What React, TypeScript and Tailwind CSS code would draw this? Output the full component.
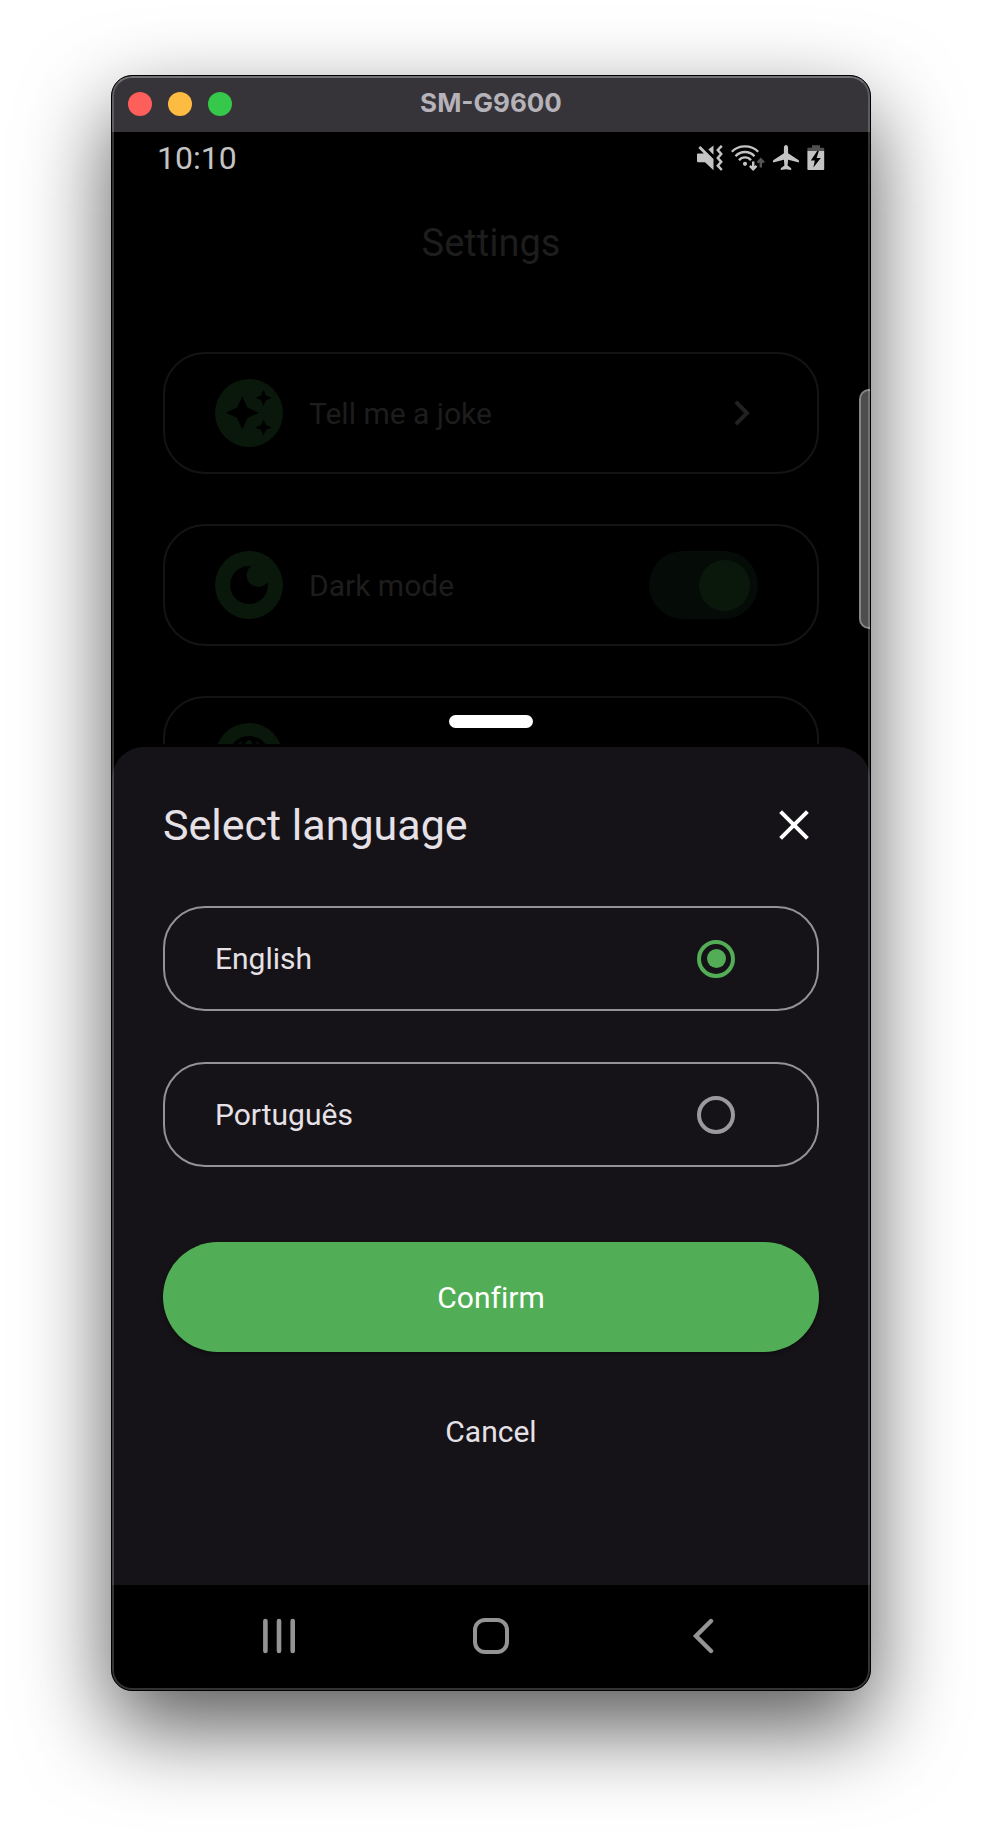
import React, { useState } from "react";

function MuteIcon() {
  return (
    <svg className="h-[26px] w-[26px]" viewBox="0 0 26 26" fill="#c4c4c4" aria-hidden="true">
      <path d="M3.4 1 16.5 14v11.3L8 17.2H1.2Q0 17.2 0 16V9.6Q0 8.4 1.2 8.4H6.8L1.4 3Z" />
      <path d="M16.5.4v9.4L11.3 4.6Z" />
      <path d="m24.8.8-4 4.2 3.4 4-3.4 4 3.4 3.8-3.4 3.9 4 4.3" fill="none" stroke="#c4c4c4" strokeWidth="2.5" />
    </svg>
  );
}

function WifiIcon() {
  return (
    <svg className="h-[26px] w-[34px]" viewBox="0 0 34 26" fill="none" stroke="#c4c4c4" strokeWidth="2.3" aria-hidden="true">
      <path d="M.8 6.8Q6 1.4 14 1.4T27.2 6.8" />
      <path d="M4.5 11.2Q8.2 7 14 7t9.5 4.2" />
      <path d="M8 15.2Q10.4 12.4 14 12.4t6 2.8" />
      <circle cx="14" cy="18.8" r="2.1" fill="#c4c4c4" stroke="none" />
      <path d="M22.2 16.6v7.4M18.9 20.8l3.3 3.4 3.3-3.4" strokeWidth="2.4" />
      <path d="M29.8 22.4v-7.6M26.7 17.6l3.1-3.3 3.1 3.3" stroke="#555555" strokeWidth="2.4" />
    </svg>
  );
}

function PlaneIcon() {
  return (
    <svg className="h-[26px] w-[26px]" viewBox="0 0 26 26" fill="#c4c4c4" aria-hidden="true">
      <path d="M13 0c1.4 0 2.1 1.4 2.1 3v5.2L25.4 15q.6.4.6 1v1.6l-10.9-2.8-.5 5.6 3.6 2.8V25L13 24.2 7.8 25v-1.8l3.6-2.8-.5-5.6L0 17.6V16q0-.6.6-1l10.3-6.8V3C10.9 1.4 11.6 0 13 0Z" />
    </svg>
  );
}

function BatteryIcon() {
  return (
    <svg className="h-[26px] w-[18px]" viewBox="0 0 18 26" aria-hidden="true">
      <path d="M5 .2h8v2.6h4.2V6H.4V2.8H5Z" fill="#505050" />
      <path d="M.4 6h16.8v18q0 1-1 1H1.4q-1 0-1-1Z" fill="#c4c4c4" />
      <path d="M10.2 6 3.8 15.4h4L6.4 22.6l7.4-9.6H9.6L11.8 6Z" fill="#000000" />
    </svg>
  );
}

function SparkleIcon() {
  return (
    <svg className="size-[68px] shrink-0" viewBox="0 0 68 68" aria-hidden="true">
      <circle cx="34" cy="34" r="34" fill="#0a180c" />
      <g fill="#000000">
        <path d="M27.3 17.3 32.4 28.6 43.8 33.8 32.4 39 27.3 50.3 22.2 39 10.8 33.8 22.2 28.6Z" />
        <path d="M48.5 10.8 51 16.4 56.6 18.8 51 21.3 48.5 26.9 46 21.3 40.4 18.8 46 16.4Z" />
        <path d="M48.5 40.4 51 46 56.6 48.5 51 51 48.5 56.6 46 51 40.4 48.5 46 46Z" />
      </g>
    </svg>
  );
}

function MoonIcon() {
  return (
    <svg className="size-[68px] shrink-0" viewBox="0 0 68 68" aria-hidden="true">
      <circle cx="34" cy="34" r="34" fill="#0a180c" />
      <circle cx="34" cy="34" r="19" fill="#000000" />
      <circle cx="43.3" cy="24.2" r="11.6" fill="#0a180c" />
    </svg>
  );
}

function GlobeIcon() {
  return (
    <svg className="size-[68px] shrink-0" viewBox="0 0 68 68" aria-hidden="true">
      <circle cx="34" cy="34" r="34" fill="#0a180c" />
      <g fill="none" stroke="#000000" strokeWidth="4">
        <circle cx="34" cy="34" r="19" />
        <ellipse cx="34" cy="34" rx="8" ry="19" />
        <path d="M16 27h36M16 41h36" />
      </g>
    </svg>
  );
}

const settingCard =
  "flex h-[122px] w-full shrink-0 items-center gap-[26px] rounded-[42px] border-2 border-[#141414] pl-[50px] text-left text-[30px] text-[#1d1d1d]";

function Titlebar() {
  return (
    <header className="grid h-14 grid-cols-[1fr_auto_1fr] items-center bg-[#363439] px-4">
      <div className="flex gap-4">
        <button aria-label="Close window" className="size-6 rounded-full bg-[#ff5f5b]" />
        <button aria-label="Minimize window" className="size-6 rounded-full bg-[#fdbb41]" />
        <button aria-label="Zoom window" className="size-6 rounded-full bg-[#35c84a]" />
      </div>
      <h1 className="pb-0.5 font-[Inter,sans-serif] text-[26px] leading-8 font-bold text-[#b5b2b9]">SM-G9600</h1>
    </header>
  );
}

function SettingsScreen() {
  return (
    <section className="flex h-[612px] flex-col overflow-hidden">
      <div className="flex h-[52px] shrink-0 items-center justify-between px-[45px] text-[32px] leading-9 text-[#c4c4c4]">
        <time>10:10</time>
        <div className="flex items-center gap-2">
          <MuteIcon />
          <WifiIcon />
          <PlaneIcon />
          <BatteryIcon />
        </div>
      </div>
      <h2 className="mt-[37px] shrink-0 text-center text-[38px] leading-[44px] text-[#1d1d1d]">Settings</h2>
      <div className="mt-[87px] flex flex-col gap-[50px] px-[51px]">
        <button className={settingCard}>
          <SparkleIcon />
          <span className="grow">Tell me a joke</span>
          <svg className="mr-[67px] h-[26px] w-4" viewBox="0 0 16 26" fill="none" stroke="#222222" strokeWidth="4" aria-hidden="true">
            <path d="m1.8 1.8 11.2 11.2L1.8 24.2" />
          </svg>
        </button>
        <label className={settingCard}>
          <MoonIcon />
          <span className="grow">Dark mode</span>
          <input
            type="checkbox"
            role="switch"
            defaultChecked
            className="mr-[59px] flex h-[68px] w-[109px] appearance-none items-center rounded-full bg-[#050b07] px-2 before:size-[51px] before:rounded-full before:bg-[#0a180b] checked:justify-end"
          />
        </label>
        <button className={settingCard} aria-label="Language">
          <GlobeIcon />
        </button>
      </div>
    </section>
  );
}

function LanguageSheet() {
  const [language, setLanguage] = useState("English");
  return (
    <section role="dialog" aria-labelledby="sheet-title" className="relative mt-[3px] rounded-t-[32px] bg-[#151317] px-[51px] pt-[50px] pb-[125px] text-[30px] text-[#e6e1e6] [font-variant-ligatures:none]">
      <div className="absolute -top-8 left-1/2 h-[13px] w-[84px] -translate-x-1/2 rounded-full bg-white" />
      <div className="flex h-14 items-center justify-between">
        <h2 id="sheet-title" className="text-[43px] leading-[56px]">Select language</h2>
        <button aria-label="Close" className="mr-[9px]">
          <svg className="size-8" viewBox="0 0 32 32" fill="none" stroke="#ffffff" strokeWidth="4" aria-hidden="true">
            <path d="m2.6 2.6 26.8 26.8M29.4 2.6 2.6 29.4" />
          </svg>
        </button>
      </div>
      <fieldset aria-label="Language" className="mt-[53px] flex flex-col gap-[51px]">
        {["English", "Português"].map((name) => (
          <label key={name} className="flex h-[105px] items-center justify-between rounded-[42px] border-2 border-[#949294] pr-[82px] pl-[50px]">
            {name}
            <input
              type="radio"
              name="language"
              value={name}
              checked={language === name}
              onChange={() => setLanguage(name)}
              className="grid size-[38px] appearance-none place-items-center rounded-full border-4 border-[#9b999b] before:size-[19px] before:rounded-full checked:border-[#52ad56] checked:before:bg-[#52ad56]"
            />
          </label>
        ))}
      </fieldset>
      <button className="mt-[75px] block h-[110px] w-full rounded-full bg-[#52ae56] text-white shadow-[0_2px_4px_rgba(0,0,0,0.4)]">Confirm</button>
      <button className="mx-auto mt-[50px] block h-[58px] px-6">Cancel</button>
    </section>
  );
}

function NavBar() {
  return (
    <nav className="flex h-[105px] items-center justify-center gap-44 pb-1">
      <button aria-label="Recent apps">
        <svg className="size-9" viewBox="0 0 36 36" stroke="#949494" strokeWidth="4.6" strokeLinecap="round" aria-hidden="true">
          <path d="M4.4 3v30M18 3v30M31.7 3v30" />
        </svg>
      </button>
      <button aria-label="Home">
        <svg className="size-9" viewBox="0 0 36 36" fill="none" stroke="#949494" strokeWidth="4" aria-hidden="true">
          <rect x="2" y="2" width="32" height="32" rx="10" />
        </svg>
      </button>
      <button aria-label="Back">
        <svg className="size-9" viewBox="0 0 36 36" fill="none" stroke="#949494" strokeWidth="4.4" strokeLinecap="round" aria-hidden="true">
          <path d="M26 3 11 18l15 15" />
        </svg>
      </button>
    </nav>
  );
}

export default function App() {
  return (
    <main className="min-h-screen overflow-hidden bg-white pt-[75px] pb-[147px] font-[Roboto,sans-serif]">
      <div className="relative mx-auto max-w-[760px] overflow-hidden rounded-[21px] border border-black bg-black shadow-[0_36px_88px_rgba(0,0,0,0.66)]">
        <Titlebar />
        <SettingsScreen />
        <LanguageSheet />
        <NavBar />
        <div className="absolute top-[313px] right-0 h-60 w-[11px] rounded-l-[10px] border-2 border-r-0 border-[#858585] bg-[#4d4d4d]" />
        <div className="pointer-events-none absolute inset-0 rounded-[20px] border-2 border-white/20 border-t-white/30" />
      </div>
    </main>
  );
}
